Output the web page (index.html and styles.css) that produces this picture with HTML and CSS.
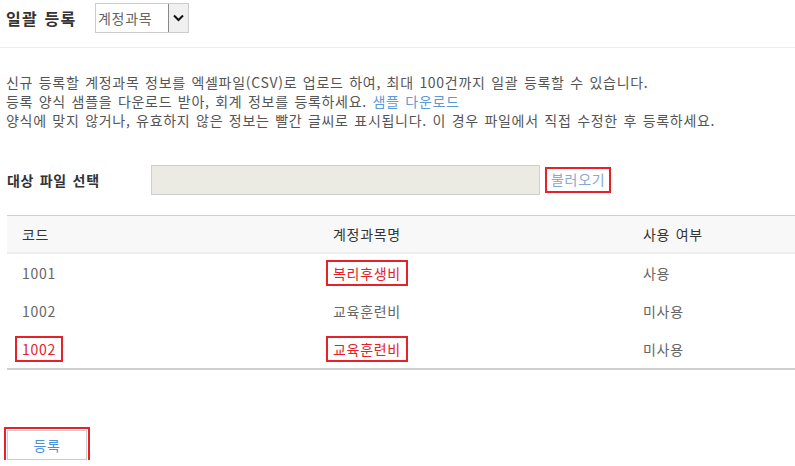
FILE: index.html
```html
<!DOCTYPE html>
<html lang="ko">
<head>
  <meta charset="UTF-8" />
  <meta name="viewport" content="width=device-width, initial-scale=1.0"/>
  <title>일괄 등록</title>
  <link rel="stylesheet" href="styles.css">
</head>
<body>
  <div class="top">
    <h2>일괄 등록</h2>
    <div class="select">
      <span class="select-text">계정과목</span>
      <span class="select-arrow">
        <svg width="11" height="8" viewBox="0 0 11 8"><path d="M1 1.5 L5.5 6 L10 1.5" fill="none" stroke="#111" stroke-width="2"/></svg>
      </span>
    </div>
  </div>

  <div class="desc">
    신규 등록할 계정과목 정보를 엑셀파일(CSV)로 업로드 하여, 최대 100건까지 일괄 등록할 수 있습니다.<br>
    등록 양식 샘플을 다운로드 받아, 회계 정보를 등록하세요. <a href="#" class="link">샘플 다운로드</a><br>
    양식에 맞지 않거나, 유효하지 않은 정보는 빨간 글씨로 표시됩니다. 이 경우 파일에서 직접 수정한 후 등록하세요.
  </div>

  <div class="file-row">
    <label class="file-label">대상 파일 선택</label>
    <div class="file-input"></div>
    <span class="load-btn">불러오기</span>
  </div>

  <table class="grid">
    <colgroup>
      <col class="c1"><col class="c2"><col>
    </colgroup>
    <thead>
      <tr><th>코드</th><th>계정과목명</th><th>사용 여부</th></tr>
    </thead>
    <tbody>
      <tr><td>1001</td><td><span class="mark err">복리후생비</span></td><td>사용</td></tr>
      <tr><td>1002</td><td>교육훈련비</td><td>미사용</td></tr>
      <tr><td><span class="mark err">1002</span></td><td><span class="mark err">교육훈련비</span></td><td>미사용</td></tr>
    </tbody>
  </table>

  <div class="actions">
    <button class="submit">등록</button>
  </div>
</body>
</html>
```

FILE: styles.css
```css
body { margin: 0; font-family: "Noto Sans CJK KR", "Noto Sans", sans-serif; color: #555; font-size: 14px; letter-spacing: 0.7px; word-spacing: 1px; background: #fff; }

.top { display: flex; align-items: flex-start; height: 48px; padding: 3px 0 0 6px; box-sizing: border-box; border-bottom: 1px solid #eeeeee; }
.top h2 { margin: 0; font-size: 16px; font-weight: bold; color: #333; line-height: 30px; width: 89px; letter-spacing: 1.2px; }
.select { display: flex; width: 94px; height: 30px; box-sizing: border-box; border: 1px solid #ccc; }
.select-text { flex: 1; padding-left: 2px; line-height: 28px; color: #666; }
.select-arrow { width: 19px; border-left: 1px solid #888; background: #f0f0f0; display: flex; align-items: center; justify-content: center; }

.desc { margin-top: 25px; padding-left: 6px; line-height: 19px; color: #555; }
.link { color: #5b9bd5; text-decoration: none; }

.file-row { display: flex; align-items: center; margin-top: 35px; padding-left: 7px; }
.file-label { width: 144px; font-weight: bold; color: #333; }
.file-input { width: 389px; height: 30px; box-sizing: border-box; background: #ebeae3; border: 1px solid #cfcfcf; }
.load-btn { margin-left: 5px; border: 2px solid #e5222a; padding: 1px 4px 2px 4px; color: #86a9d2; line-height: 19px; }

.grid { margin: 20px 0 0 7px; width: calc(100% - 7px); border-collapse: collapse; table-layout: fixed; border-top: 1px solid #cfcfcf; border-bottom: 2px solid #d0d0d0; }
.grid .c1 { width: 311px; }
.grid .c2 { width: 310px; }
.grid th { height: 36px; background: #f8f8f8; border-bottom: 2px solid #eeeeee; text-align: left; font-weight: normal; color: #333; padding: 0 0 0 15px; }
.grid td { height: 38px; padding: 0 0 0 15px; color: #666; }
.mark { display: inline-block; padding: 2px 5px; margin: -4px -7px; border: 2px solid #e5222a; line-height: 18px; }
.err { color: #e5222a; }

.actions { margin: 60px 0 0 7px; }
.submit { width: 80px; height: 30px; background: #fff; border: 1px solid #cccccc; color: #4a8fde; font-family: inherit; font-size: 14px; letter-spacing: 0.7px; outline: 2px solid #e5222a; outline-offset: 1px; cursor: pointer; }
```
